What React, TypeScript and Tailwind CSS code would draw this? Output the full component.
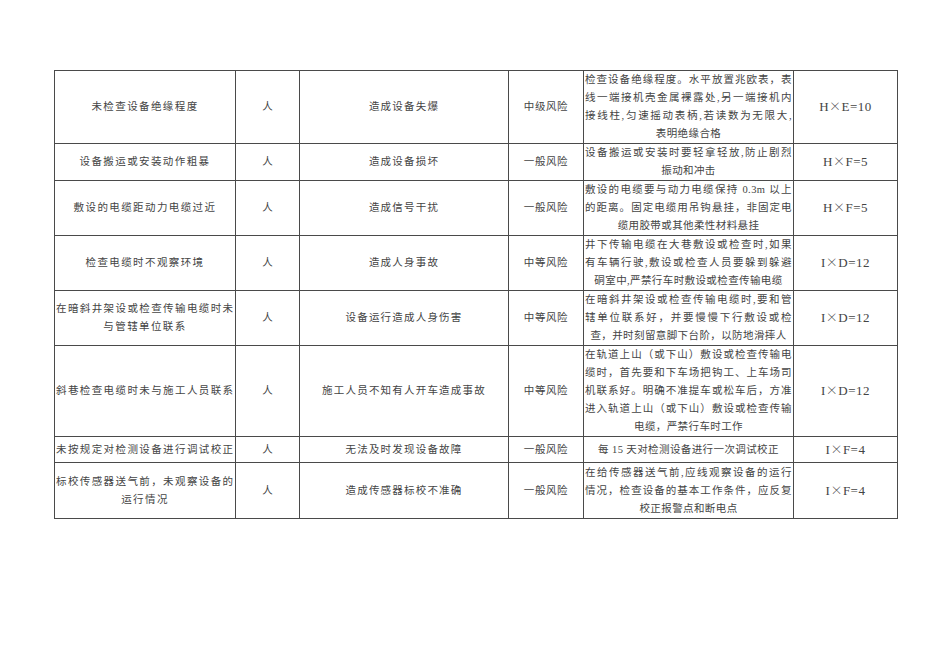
import React from "react";

type Row = {
  hazard: string[];
  type: string;
  result: string;
  level: string;
  measure: string[];
  score: string;
  h: string;
};

const rows: Row[] = [
  {
    hazard: ["未检查设备绝缘程度"],
    type: "人",
    result: "造成设备失爆",
    level: "中级风险",
    measure: [
      "检查设备绝缘程度。水平放置兆欧表，表",
      "线一端接机壳金属裸露处,另一端接机内",
      "接线柱,匀速摇动表柄,若读数为无限大,",
      "表明绝缘合格",
    ],
    score: "H×E=10",
    h: "h-[73px]",
  },
  {
    hazard: ["设备搬运或安装动作粗暴"],
    type: "人",
    result: "造成设备损坏",
    level: "一般风险",
    measure: ["设备搬运或安装时要轻拿轻放,防止剧烈", "振动和冲击"],
    score: "H×F=5",
    h: "h-[37px]",
  },
  {
    hazard: ["敷设的电缆距动力电缆过近"],
    type: "人",
    result: "造成信号干扰",
    level: "一般风险",
    measure: [
      "敷设的电缆要与动力电缆保持 0.3m 以上",
      "的距离。固定电缆用吊钩悬挂，非固定电",
      "缆用胶带或其他柔性材料悬挂",
    ],
    score: "H×F=5",
    h: "h-[55px]",
  },
  {
    hazard: ["检查电缆时不观察环境"],
    type: "人",
    result: "造成人身事故",
    level: "中等风险",
    measure: [
      "井下传输电缆在大巷敷设或检查时,如果",
      "有车辆行驶,敷设或检查人员要躲到躲避",
      "硐室中,严禁行车时敷设或检查传输电缆",
    ],
    score: "I×D=12",
    h: "h-[55px]",
  },
  {
    hazard: ["在暗斜井架设或检查传输电缆时未", "与管辖单位联系"],
    type: "人",
    result: "设备运行造成人身伤害",
    level: "中等风险",
    measure: [
      "在暗斜井架设或检查传输电缆时,要和管",
      "辖单位联系好，并要慢慢下行敷设或检",
      "查，并时刻留意脚下台阶，以防地滑摔人",
    ],
    score: "I×D=12",
    h: "h-[55px]",
  },
  {
    hazard: ["斜巷检查电缆时未与施工人员联系"],
    type: "人",
    result: "施工人员不知有人开车造成事故",
    level: "中等风险",
    measure: [
      "在轨道上山（或下山）敷设或检查传输电",
      "缆时，首先要和下车场把钩工、上车场司",
      "机联系好。明确不准提车或松车后，方准",
      "进入轨道上山（或下山）敷设或检查传输",
      "电缆，严禁行车时工作",
    ],
    score: "I×D=12",
    h: "h-[91px]",
  },
  {
    hazard: ["未按规定对检测设备进行调试校正"],
    type: "人",
    result: "无法及时发现设备故障",
    level: "一般风险",
    measure: ["每 15 天对检测设备进行一次调试校正"],
    score: "I×F=4",
    h: "h-[26px]",
  },
  {
    hazard: ["标校传感器送气前，未观察设备的", "运行情况"],
    type: "人",
    result: "造成传感器标校不准确",
    level: "一般风险",
    measure: [
      "在给传感器送气前,应线观察设备的运行",
      "情况，检查设备的基本工作条件，应反复",
      "校正报警点和断电点",
    ],
    score: "I×F=4",
    h: "h-[56px]",
  },
];

// 多行文字：前几行两端对齐，最后一行居中
function Lines({ lines }: { lines: string[] }) {
  return (
    <div className="leading-[18px]">
      {lines.map((line, i) =>
        i < lines.length - 1 ? (
          <div key={i} className="text-justify [text-align-last:justify] whitespace-nowrap">
            {line}
          </div>
        ) : (
          <div key={i} className="text-center whitespace-nowrap">
            {line}
          </div>
        )
      )}
    </div>
  );
}

// 风险值：乘号用中文字体显示（全角宽度）
function Score({ value }: { value: string }) {
  const [a, b] = value.split("×");
  return (
    <>
      {a}
      <span className="font-['Noto_Sans_CJK_SC',sans-serif] text-[12px] font-light">×</span>
      {b}
    </>
  );
}

const cell = "border border-[#4a4a4a] p-0 align-middle";

export default function App() {
  return (
    <div className="min-h-[672px] w-[950px] bg-white pt-[70px] pl-[54px] text-[#444] font-['Liberation_Serif','Noto_Sans_CJK_SC',serif] text-[10.5px]">
      <table className="border-collapse table-fixed w-[843px]">
        <colgroup>
          <col className="w-[181px]" />
          <col className="w-[64px]" />
          <col className="w-[209px]" />
          <col className="w-[75px]" />
          <col className="w-[210px]" />
          <col className="w-[104px]" />
        </colgroup>
        <tbody>
          {rows.map((r, i) => (
            <tr key={i} className={r.h}>
              <td className={`${cell} px-[1px] tracking-[1.4px]`}>
                <Lines lines={r.hazard} />
              </td>
              <td className={`${cell} text-center`}>{r.type}</td>
              <td className={`${cell} text-center tracking-[1.2px]`}>{r.result}</td>
              <td className={`${cell} text-center tracking-[0.6px]`}>{r.level}</td>
              <td className={`${cell} px-[1px] tracking-[0.4px]`}>
                <Lines lines={r.measure} />
              </td>
              <td className={`${cell} text-center text-[13px] tracking-[0.5px]`}>
                <Score value={r.score} />
              </td>
            </tr>
          ))}
        </tbody>
      </table>
    </div>
  );
}
